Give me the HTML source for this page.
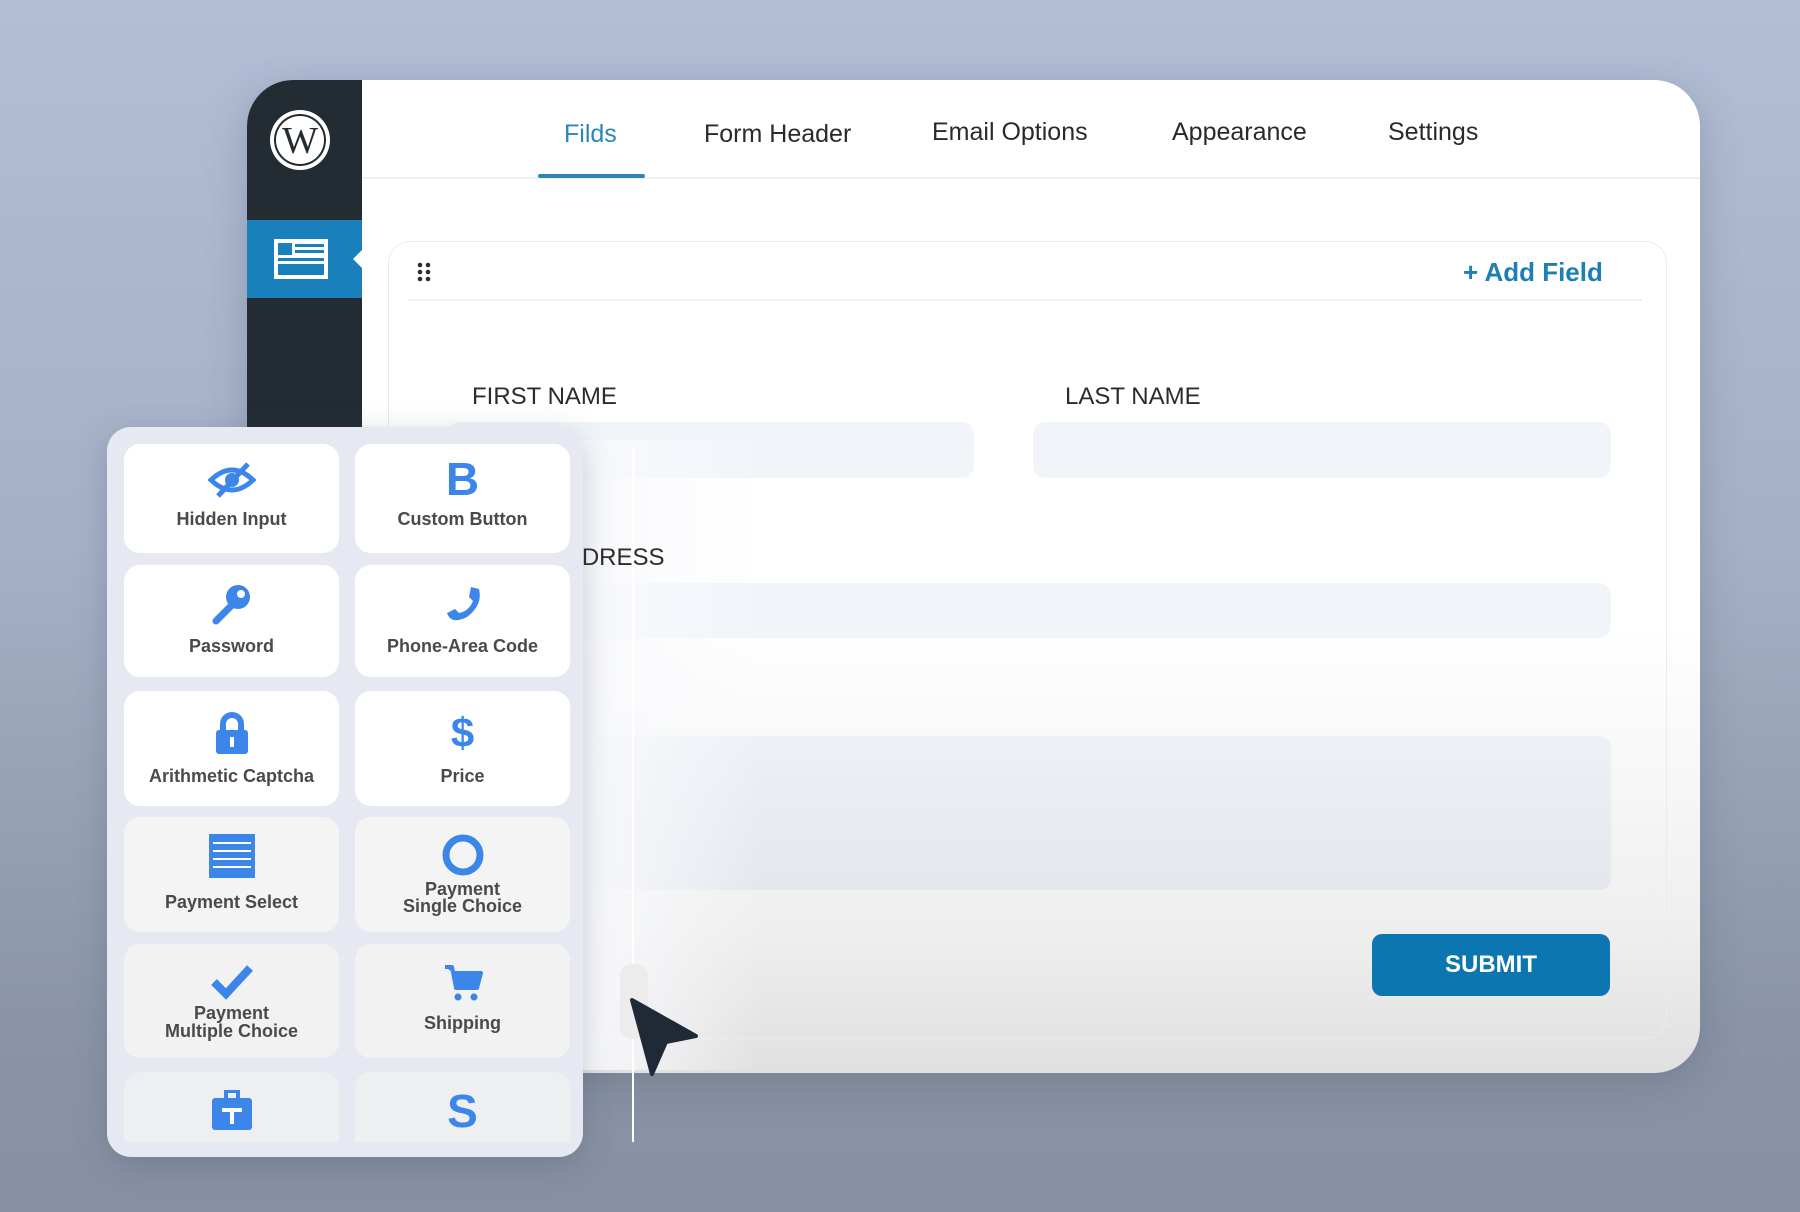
<!DOCTYPE html>
<html><head><meta charset="utf-8"><style>
*{margin:0;padding:0;box-sizing:border-box}
body{width:1800px;height:1212px;overflow:hidden;position:relative;font-family:"Liberation Sans",sans-serif;background:linear-gradient(180deg,#b2bed6 0%,#a5b0c6 45%,#8a94a6 85%,#8790a2 100%)}
.abs{position:absolute}
.card{left:247px;top:80px;width:1453px;height:993px;border-radius:46px;background:linear-gradient(180deg,#ffffff 0%,#ffffff 55%,#efefef 85%,#e0e0e0 100%);overflow:hidden;box-shadow:0 10px 40px rgba(60,70,90,.25)}
.side{left:0;top:0;width:115px;height:993px;background:#242c33}
.tab{top:40px;font-size:25px;color:#2a2a2a}
.inner{left:388px;top:241px;width:1279px;height:798px;border:1px solid #e8ecf0;border-radius:22px}
.lbl{font-size:24px;color:#2c2c2c;top:383px}
.inp{background:#f1f5fa;border-radius:12px}
.panel{left:107px;top:427px;width:476px;height:730px;border-radius:24px;background:#e6e9f2;box-shadow:0 8px 30px rgba(60,70,100,.25)}
.cell{position:absolute;width:215px;border-radius:16px;background:#fff;text-align:center;font-size:18px;font-weight:bold;color:#4a4a4a;line-height:18px}
.cell svg{display:block;margin:0 auto}
</style></head><body>
<div class="abs card">
 <div class="abs side"></div>
 <div class="abs" style="left:0;top:140px;width:115px;height:78px;background:#1a80bb"></div>
 <svg class="abs" style="left:21px;top:28px" width="64" height="64" viewBox="0 0 64 64"><circle cx="32" cy="32" r="30" fill="#fff"/><circle cx="32" cy="32" r="26" fill="#242c33"/><circle cx="32" cy="32" r="24" fill="#fff"/><text x="32" y="45" text-anchor="middle" font-family="Liberation Serif" font-size="38" fill="#242c33">W</text></svg>
 <svg class="abs" style="left:26px;top:158px" width="56" height="42" viewBox="0 0 56 42"><rect x="1" y="1" width="54" height="40" fill="#fff"/><rect x="5" y="5" width="14" height="12" fill="#1a80bb"/><rect x="22" y="6" width="29" height="3" fill="#1a80bb"/><rect x="22" y="12" width="29" height="3" fill="#1a80bb"/><rect x="5" y="20" width="46" height="3" fill="#1a80bb"/><rect x="5" y="26" width="46" height="11" fill="#1a80bb"/></svg>
 <div class="abs" style="left:106px;top:170px;width:0;height:0;border-top:9px solid transparent;border-bottom:9px solid transparent;border-right:9px solid #fff"></div>
 <div class="abs" style="left:115px;top:97px;width:1338px;height:2px;background:#eef0f2"></div>
 <div class="abs tab" style="left:317px;color:#2a86b8">Filds</div>
 <div class="abs" style="left:291px;top:94px;width:107px;height:4px;background:#2a86b8;border-radius:2px"></div>
 <div class="abs tab" style="left:457px">Form Header</div>
 <div class="abs tab" style="left:685px;top:38px">Email Options</div>
 <div class="abs tab" style="left:925px;top:38px">Appearance</div>
 <div class="abs tab" style="left:1141px;top:38px">Settings</div>
</div>
<div class="abs inner"></div>
<svg class="abs" style="left:416px;top:261px" width="16" height="22" viewBox="0 0 16 22"><g fill="#2c2c2c"><circle cx="4" cy="4" r="2.3"/><circle cx="12" cy="4" r="2.3"/><circle cx="4" cy="11" r="2.3"/><circle cx="12" cy="11" r="2.3"/><circle cx="4" cy="18" r="2.3"/><circle cx="12" cy="18" r="2.3"/></g></svg>
<div class="abs" style="left:1463px;top:257px;font-size:26px;color:#1f7fb4;font-weight:bold">+ Add Field</div>
<div class="abs" style="left:408px;top:299px;width:1234px;height:2px;background:#eef0f2"></div>
<div class="abs lbl" style="left:472px">FIRST NAME</div>
<div class="abs lbl" style="left:1065px">LAST NAME</div>
<div class="abs inp" style="left:448px;top:422px;width:526px;height:56px"></div>
<div class="abs inp" style="left:1033px;top:422px;width:578px;height:56px"></div>
<div class="abs inp" style="left:448px;top:583px;width:1163px;height:55px"></div>
<div class="abs inp" style="left:448px;top:736px;width:1163px;height:154px;background:linear-gradient(180deg,#edf1f6,#e4e8ee)"></div>
<div class="abs" style="left:1372px;top:934px;width:238px;height:62px;border-radius:10px;background:#0b76b0;color:#fff;font-weight:bold;font-size:24px;text-align:center;line-height:62px">SUBMIT</div>

<div class="abs" style="left:560px;top:440px;width:200px;height:630px;background:linear-gradient(90deg,rgba(248,249,252,1) 0%,rgba(248,249,252,1) 10%,rgba(255,255,255,0) 100%)"></div>
<div class="abs lbl" style="left:472px;top:544px">EMAIL ADDRESS</div>
<div class="abs" style="left:632px;top:448px;width:2px;height:694px;background:#fff"></div>
<div class="abs" style="left:620px;top:964px;width:28px;height:75px;border-radius:12px;background:#ececec"></div>
<svg class="abs" style="left:628px;top:996px" width="72" height="82" viewBox="0 0 72 82"><path d="M4 4 L68 40 L38 46 L24 78 Z" fill="#1f2a36" stroke="#1f2a36" stroke-width="4" stroke-linejoin="round"/></svg>

<div class="abs panel">
 <div class="cell" style="left:17px;top:17px;height:109px"><svg width="48" height="40" viewBox="0 0 48 40" style="margin-top:16px"><path d="M3 20 Q24 0 45 20 Q24 40 3 20Z" fill="none" stroke="#3b86e8" stroke-width="5"/><circle cx="24" cy="20" r="7" fill="#3b86e8"/><path d="M10 36 L40 4" stroke="#3b86e8" stroke-width="5"/></svg><div style="margin-top:10px">Hidden Input</div></div>
 <div class="cell" style="left:248px;top:17px;height:109px"><div style="color:#3b86e8;font-size:46px;line-height:46px;margin-top:12px">B</div><div style="margin-top:8px">Custom Button</div></div>
 <div class="cell" style="left:17px;top:138px;height:112px"><svg width="44" height="42" viewBox="0 0 44 42" style="margin-top:18px"><circle cx="28" cy="14" r="12" fill="#3b86e8"/><circle cx="31" cy="11" r="4" fill="#fff"/><path d="M22 22 L6 38" stroke="#3b86e8" stroke-width="7" stroke-linecap="round"/></svg><div style="margin-top:12px">Password</div></div>
 <div class="cell" style="left:248px;top:138px;height:112px"><svg width="44" height="42" viewBox="0 0 44 42" style="margin-top:18px"><path d="M6 30 Q10 42 26 34 Q42 22 38 6 L30 4 L28 14 L32 18 Q28 28 18 30 L14 26 L6 30Z" fill="#3b86e8"/></svg><div style="margin-top:12px">Phone-Area Code</div></div>
 <div class="cell" style="left:17px;top:264px;height:115px"><svg width="36" height="44" viewBox="0 0 36 44" style="margin-top:20px"><path d="M9 20 V13 A9 9 0 0 1 27 13 V20" fill="none" stroke="#3b86e8" stroke-width="6"/><rect x="2" y="19" width="32" height="24" rx="3" fill="#3b86e8"/><rect x="16" y="26" width="4" height="10" fill="#fff"/></svg><div style="margin-top:12px">Arithmetic Captcha</div></div>
 <div class="cell" style="left:248px;top:264px;height:115px"><div style="color:#3b86e8;font-size:42px;line-height:44px;margin-top:20px">$</div><div style="margin-top:12px">Price</div></div>
 <div class="cell" style="left:17px;top:390px;height:115px;background:#f4f4f5"><svg width="48" height="46" viewBox="0 0 48 46" style="margin-top:16px"><rect x="1" y="1" width="46" height="44" fill="#3b86e8"/><g fill="#fff"><rect x="5" y="9" width="38" height="2"/><rect x="5" y="17" width="38" height="2"/><rect x="5" y="25" width="38" height="2"/><rect x="5" y="33" width="38" height="2"/></g></svg><div style="margin-top:14px">Payment Select</div></div>
 <div class="cell" style="left:248px;top:390px;height:115px;background:#f4f4f5"><svg width="44" height="44" viewBox="0 0 44 44" style="margin-top:16px"><circle cx="22" cy="22" r="17" fill="none" stroke="#3b86e8" stroke-width="7"/></svg><div style="margin-top:4px;line-height:17px">Payment<br>Single Choice</div></div>
 <div class="cell" style="left:17px;top:517px;height:114px;background:#f2f2f3"><svg width="44" height="36" viewBox="0 0 44 36" style="margin-top:20px"><path d="M4 18 L16 30 L40 4" fill="none" stroke="#3b86e8" stroke-width="8"/></svg><div style="margin-top:4px;line-height:18px">Payment<br>Multiple Choice</div></div>
 <div class="cell" style="left:248px;top:517px;height:114px;background:#f2f2f3"><svg width="40" height="38" viewBox="0 0 40 38" style="margin-top:20px"><path d="M2 3 H9 L13 24 H34 L38 9 H11" fill="#3b86e8" stroke="#3b86e8" stroke-width="4" stroke-linejoin="round"/><circle cx="15" cy="33" r="3.5" fill="#3b86e8"/><circle cx="31" cy="33" r="3.5" fill="#3b86e8"/></svg><div style="margin-top:12px">Shipping</div></div>
 <div class="cell" style="left:17px;top:645px;height:70px;border-radius:16px 16px 0 0;background:#eeeff1"><svg width="44" height="42" viewBox="0 0 44 42" style="margin-top:18px"><rect x="2" y="8" width="40" height="32" rx="3" fill="#3b86e8"/><rect x="16" y="1" width="12" height="9" fill="none" stroke="#3b86e8" stroke-width="4"/><rect x="12" y="18" width="20" height="4" fill="#fff"/><rect x="20" y="18" width="4" height="16" fill="#fff"/></svg></div>
 <div class="cell" style="left:248px;top:645px;height:70px;border-radius:16px 16px 0 0;background:#eeeff1"><div style="color:#3b86e8;font-size:46px;line-height:46px;margin-top:16px">S</div></div>
</div>
</body></html>
